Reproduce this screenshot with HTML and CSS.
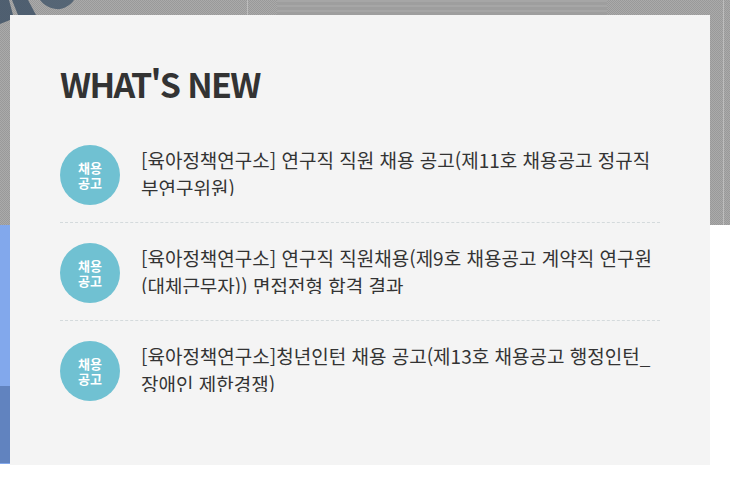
FILE: index.html
```
<!DOCTYPE html>
<html lang="ko">
<head>
<meta charset="utf-8">
<title>What's New</title>
<link rel="stylesheet" href="styles.css">
</head>
<body>
<div class="backdrop">
  <div class="hero">
    <div class="stripes"></div>
    <div class="rule rule-a"></div>
    <div class="rule rule-b"></div>
    <svg class="shapes" width="90" height="30" viewBox="0 0 90 30">
      <path d="M0 0H9L13 15H10V20L0 24Z" fill="#46586a" fill-opacity=".9"/>
      <path d="M12 0H28L36 15H18Z" fill="#46586a" fill-opacity=".9"/>
      <path d="M40 0H74C70 6 62 10 56 9C49 8 44 5 40 0Z" fill="#4c5e70" fill-opacity=".9"/>
    </svg>
  </div>
  <div class="strip"></div>
</div>
<main class="card">
  <h2 class="title">WHAT'S NEW</h2>
  <ul class="news">
    <li class="item">
      <span class="badge">채용<br>공고</span>
      <p class="text">[육아정책연구소] 연구직 직원 채용 공고(제11호 채용공고 정규직 부연구위원)</p>
    </li>
    <li class="item">
      <span class="badge">채용<br>공고</span>
      <p class="text">[육아정책연구소] 연구직 직원채용(제9호 채용공고 계약직 연구원(대체근무자)) 면접전형 합격 결과</p>
    </li>
    <li class="item">
      <span class="badge">채용<br>공고</span>
      <p class="text">[육아정책연구소]청년인턴 채용 공고(제13호 채용공고 행정인턴_장애인 제한경쟁)</p>
    </li>
  </ul>
</main>
</body>
</html>
```
FILE: styles.css
```
* { box-sizing: border-box; }
html, body { margin: 0; padding: 0; background: #fff; }
body {
  position: relative;
  height: 484px;
  overflow: hidden;
  font-family: "Noto Sans CJK KR", "Noto Sans", sans-serif;
  padding: 15px 0 0 10px;
}
.backdrop { position: absolute; inset: 0; z-index: 0; }
.hero {
  position: relative;
  height: 225px;
  overflow: hidden;
  background: repeating-conic-gradient(#aaa 0 25%, #999 0 50%) 0 0 / 2px 2px;
}
.stripes {
  position: absolute;
  left: 277px;
  top: 0;
  width: 330px;
  height: 15px;
  background: repeating-linear-gradient(180deg, #a6a6a6 0 2px, #9e9e9e 2px 5px);
}
.rule { position: absolute; top: 0; bottom: 0; width: 1px; background: #bcbcbc; }
.rule-a { left: 247px; }
.rule-b { left: 723px; }
.shapes { position: absolute; left: 0; top: 0; }
.strip {
  width: 10px;
  height: 239px;
  background: linear-gradient(180deg, #82a8ec 0 161px, #6183bf 161px 238px, #82a8ec 238px);
}
.card {
  position: relative;
  z-index: 1;
  width: 700px;
  height: 450px;
  padding: 47px 50px 0;
  background: #f4f4f4;
}
.title {
  margin: 0 0 40px;
  font-size: 34px;
  line-height: 43px;
  font-weight: 700;
  color: #333;
  letter-spacing: -1.7px;
}
.news { list-style: none; margin: 0; padding: 0; }
.item {
  display: flex;
  align-items: flex-start;
  gap: 21px;
  padding-bottom: 17px;
  margin-bottom: 20px;
  border-bottom: 1px dashed #d4dadc;
}
.item:last-child { border-bottom: 0; }
.badge {
  flex: none;
  width: 60px;
  height: 60px;
  padding-top: 15px;
  border-radius: 50%;
  background: #70c1d2;
  color: #fff;
  font-size: 13px;
  line-height: 15px;
  font-weight: 700;
  text-align: center;
}
.text {
  flex: 1;
  height: 51px;
  margin: 0;
  padding-top: 1px;
  overflow: hidden;
  font-size: 19px;
  line-height: 28px;
  word-break: keep-all;
  color: #333;
}
```
